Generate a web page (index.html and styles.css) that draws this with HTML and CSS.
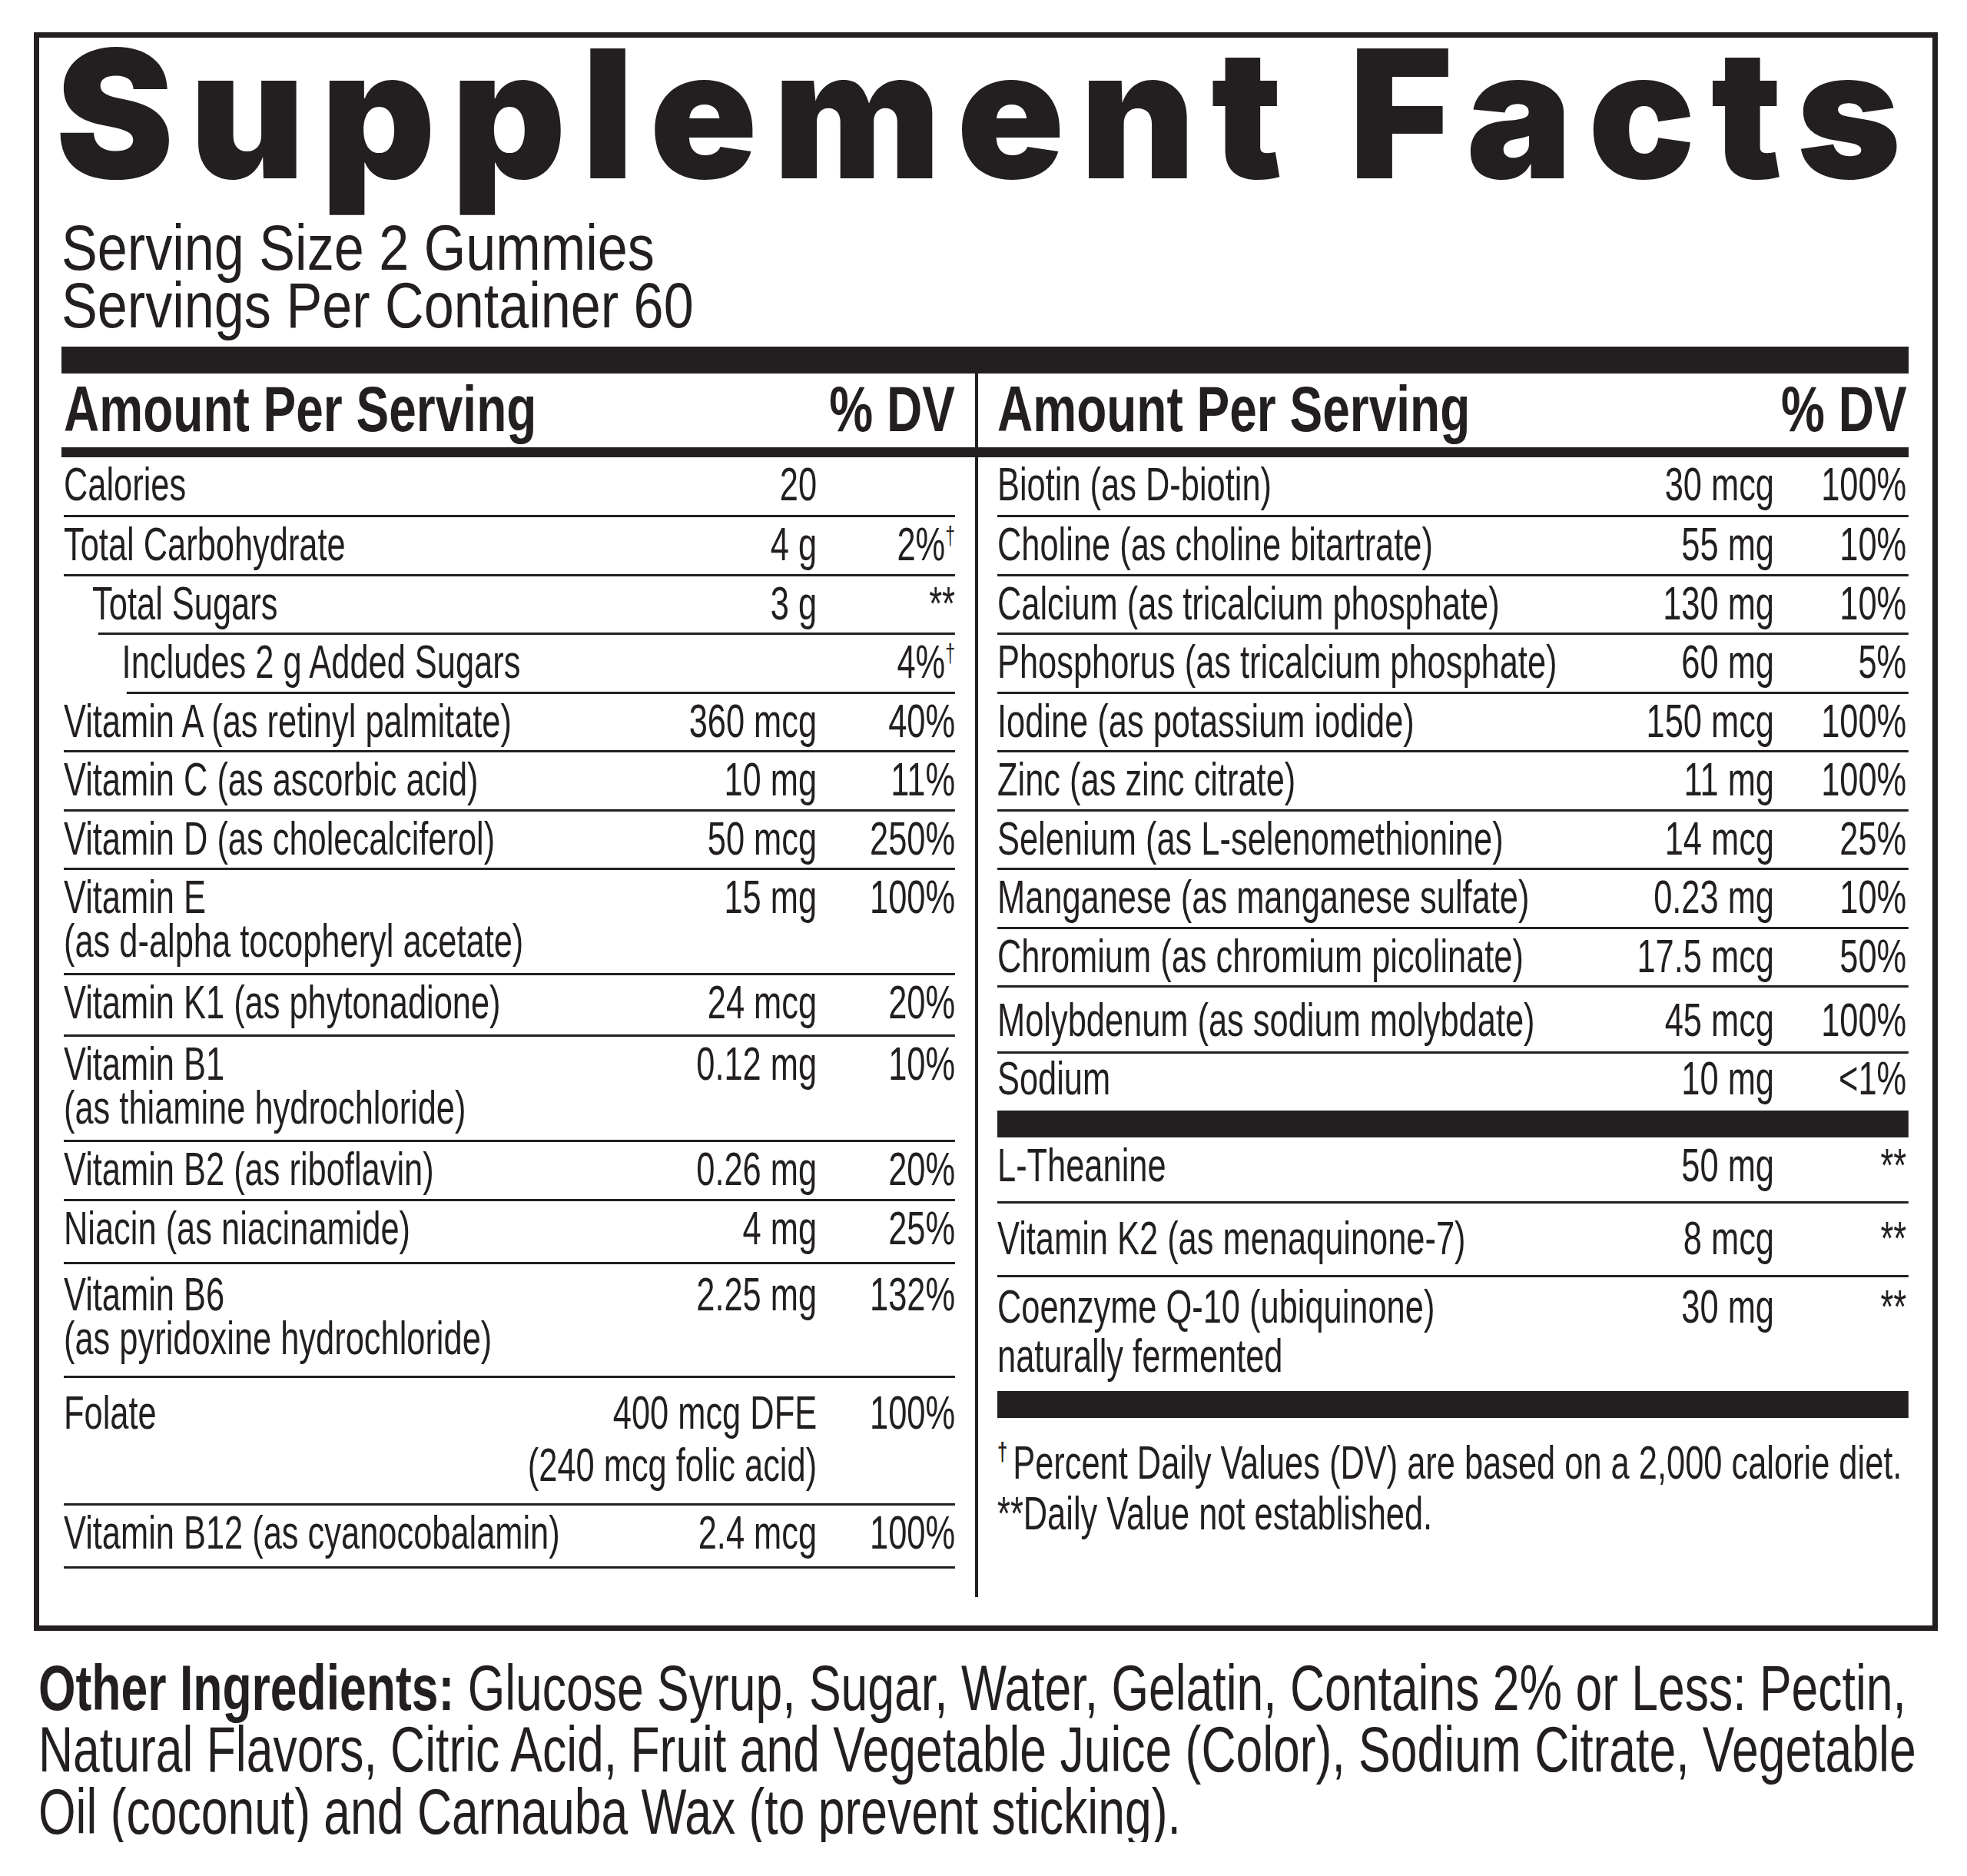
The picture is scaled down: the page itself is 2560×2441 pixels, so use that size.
FILE: index.html
```html
<!DOCTYPE html>
<html lang="en">
<head>
<meta charset="utf-8">
<title>Supplement Facts</title>
<link rel="stylesheet" href="styles.css">
</head>
<body>
<div class="label">
  <h1 class="title">Supplement Facts</h1>
  <div class="serving">Serving Size 2 Gummies<br>Servings Per Container 60</div>
  <div class="bar bar--top"></div>
  <div class="panel">
    <div class="head head--left"><span>Amount Per Serving</span><span>% DV</span></div>
    <div class="divider"></div>
    <div class="head head--right"><span>Amount Per Serving</span><span>% DV</span></div>
    <div class="head-rule"></div>

    <div class="col col--left">
      <div class="squeeze">
        <div class="row row--first"><span class="name">Calories</span><span class="amt">20</span><span class="pct"></span></div>
        <div class="row"><span class="name">Total Carbohydrate</span><span class="amt">4 g</span><span class="pct">2%<sup class="dag">†</sup></span></div>
        <div class="row row--indent1"><span class="name">Total Sugars</span><span class="amt">3 g</span><span class="pct">**</span></div>
        <div class="row row--indent2"><span class="name">Includes 2 g Added Sugars</span><span class="amt"></span><span class="pct">4%<sup class="dag">†</sup></span></div>
        <div class="row"><span class="name">Vitamin A (as retinyl palmitate)</span><span class="amt">360 mcg</span><span class="pct">40%</span></div>
        <div class="row"><span class="name">Vitamin C (as ascorbic acid)</span><span class="amt">10 mg</span><span class="pct">11%</span></div>
        <div class="row"><span class="name">Vitamin D (as cholecalciferol)</span><span class="amt">50 mcg</span><span class="pct">250%</span></div>
        <div class="row row--two"><span class="name">Vitamin E<br>(as d-alpha tocopheryl acetate)</span><span class="amt">15 mg</span><span class="pct">100%</span></div>
        <div class="row row--loose"><span class="name">Vitamin K1 (as phytonadione)</span><span class="amt">24 mcg</span><span class="pct">20%</span></div>
        <div class="row row--two"><span class="name">Vitamin B1<br>(as thiamine hydrochloride)</span><span class="amt">0.12 mg</span><span class="pct">10%</span></div>
        <div class="row"><span class="name">Vitamin B2 (as riboflavin)</span><span class="amt">0.26 mg</span><span class="pct">20%</span></div>
        <div class="row row--looser"><span class="name">Niacin (as niacinamide)</span><span class="amt">4 mg</span><span class="pct">25%</span></div>
        <div class="row row--b6"><span class="name">Vitamin B6<br>(as pyridoxine hydrochloride)</span><span class="amt">2.25 mg</span><span class="pct">132%</span></div>
        <div class="row row--folate"><span class="name">Folate</span><span class="amt">400 mcg DFE<br>(240 mcg folic acid)</span><span class="pct">100%</span></div>
        <div class="row row--looser"><span class="name">Vitamin B12 (as cyanocobalamin)</span><span class="amt">2.4 mcg</span><span class="pct">100%</span></div>
      </div>
    </div>

    <div class="col col--right">
      <div class="squeeze">
        <div class="row row--first"><span class="name">Biotin (as D-biotin)</span><span class="amt">30 mcg</span><span class="pct">100%</span></div>
        <div class="row"><span class="name">Choline (as choline bitartrate)</span><span class="amt">55 mg</span><span class="pct">10%</span></div>
        <div class="row"><span class="name">Calcium (as tricalcium phosphate)</span><span class="amt">130 mg</span><span class="pct">10%</span></div>
        <div class="row"><span class="name">Phosphorus (as tricalcium phosphate)</span><span class="amt">60 mg</span><span class="pct">5%</span></div>
        <div class="row"><span class="name">Iodine (as potassium iodide)</span><span class="amt">150 mcg</span><span class="pct">100%</span></div>
        <div class="row"><span class="name">Zinc (as zinc citrate)</span><span class="amt">11 mg</span><span class="pct">100%</span></div>
        <div class="row"><span class="name">Selenium (as L-selenomethionine)</span><span class="amt">14 mcg</span><span class="pct">25%</span></div>
        <div class="row"><span class="name">Manganese (as manganese sulfate)</span><span class="amt">0.23 mg</span><span class="pct">10%</span></div>
        <div class="row"><span class="name">Chromium (as chromium picolinate)</span><span class="amt">17.5 mcg</span><span class="pct">50%</span></div>
        <div class="row row--moly"><span class="name">Molybdenum (as sodium molybdate)</span><span class="amt">45 mcg</span><span class="pct">100%</span></div>
        <div class="row row--sodium"><span class="name">Sodium</span><span class="amt">10 mg</span><span class="pct">&lt;1%</span></div>
        <div class="bar"></div>
        <div class="row row--theanine"><span class="name">L-Theanine</span><span class="amt">50 mg</span><span class="pct">**</span></div>
        <div class="row row--k2"><span class="name">Vitamin K2 (as menaquinone-7)</span><span class="amt">8 mcg</span><span class="pct">**</span></div>
        <div class="row row--coq"><span class="name">Coenzyme Q-10 (ubiquinone)<br>naturally fermented</span><span class="amt">30 mg</span><span class="pct">**</span></div>
        <div class="bar"></div>
        <div class="notes">
          <p class="note"><sup class="dag dag--note">†</sup>Percent Daily Values (DV) are based on a 2,000 calorie diet.</p>
          <p class="note">**Daily Value not established.</p>
        </div>
      </div>
    </div>
  </div>
</div>
<p class="ingredients"><b>Other Ingredients:</b> Glucose Syrup, Sugar, Water, Gelatin, Contains 2% or Less: Pectin,<br>Natural Flavors, Citric Acid, Fruit and Vegetable Juice (Color), Sodium Citrate, Vegetable<br>Oil (coconut) and Carnauba Wax (to prevent sticking).</p>
</body>
</html>
```

FILE: styles.css
```css
:root {
  --ink: #231f20;
  --squeeze: 0.70;
  --head-squeeze: 0.762;
}

* { box-sizing: border-box; }

body {
  margin: 0;
  background: #fff;
  color: var(--ink);
  font-family: "Liberation Sans", Arial, sans-serif;
}

.label {
  width: 2478px;
  margin: 42px 0 0 44px;
  border: 7px solid var(--ink);
  padding: 0 31px 37px 29px;
}

.title {
  margin: 0 0 0 -8px;
  font-family: Inter, "Liberation Sans", sans-serif;
  font-weight: 900;
  font-size: 232px;
  line-height: 198px;
  letter-spacing: 20px;
  white-space: nowrap;
}

.serving {
  margin-top: 38px;
  font-size: 84px;
  line-height: 75px;
  white-space: nowrap;
  transform: scaleX(0.835);
  transform-origin: 0 0;
}

.bar {
  height: 35px;
  background: var(--ink);
}

.bar--top { margin-top: 16px; }

.panel {
  display: grid;
  grid-template-columns: 1163px 55px 1186px;
  grid-template-rows: 96px 13px auto 37px;
}

.head {
  grid-row: 1;
  display: flex;
  justify-content: space-between;
  font-weight: 700;
  font-size: 84px;
  line-height: 92px;
  padding-bottom: 4px;
  white-space: nowrap;
  transform: scaleX(var(--head-squeeze));
  transform-origin: 0 0;
}

.head--left { grid-column: 1; width: calc(1163px / var(--head-squeeze)); padding-left: 4px; }
.head--right { grid-column: 3; width: calc(1186px / var(--head-squeeze)); padding-right: 3px; }

.head-rule {
  grid-row: 2;
  grid-column: 1 / -1;
  background: var(--ink);
}

.divider {
  grid-column: 2;
  grid-row: 1 / -1;
  width: 4px;
  justify-self: center;
  background: var(--ink);
}

.col { grid-row: 3; min-width: 0; }
.col--left { grid-column: 1; padding-left: 3px; }
.col--right { grid-column: 3; }

.squeeze {
  width: calc(100% / var(--squeeze));
  transform: scaleX(var(--squeeze));
  transform-origin: 0 0;
  font-size: 62px;
  line-height: 57px;
}

.row {
  display: grid;
  grid-template-columns: 1fr auto 257px;
  padding: 6px 0 10.5px;
  border-bottom: 3px solid var(--ink);
  white-space: nowrap;
}

.col--right .row { grid-template-columns: 1fr auto 250px; }
.col--right .pct { padding-right: 4px; }

.amt, .pct { text-align: right; }

.row--first { padding-bottom: 12px; }
.row--loose { padding-bottom: 14px; }
.row--looser { padding-bottom: 16px; }
.row--two { padding-bottom: 14px; }
.row--b6 { padding: 10px 0 21px; }
.row--folate { padding: 11px 0 16px; line-height: 68px; }

.row--indent1 { margin-left: 64px; }
.row--indent1 .name { margin-left: -11px; }
.row--indent2 { margin-left: 117px; }
.row--indent2 .name { margin-left: -9px; }

.row--moly { padding: 13px 0 12.5px; }
.row--sodium { padding: 3px 0 14.5px; border-bottom: 0; }
.row--theanine { padding: 7px 0 19px; }
.row--k2 { padding: 16px 0 20px; }
.row--coq { padding: 5.5px 0 14.5px; line-height: 64px; border-bottom: 0; }

.dag {
  font-size: 33px;
  line-height: 0;
  vertical-align: 21px;
}

.dag--note {
  font-size: 34px;
  font-weight: 700;
  vertical-align: 24px;
  margin-right: 10px;
}

.notes { padding-top: 25px; }

.note {
  margin: 0;
  line-height: 66px;
  white-space: nowrap;
}

.ingredients {
  margin: 34px 0 0 50px;
  font-size: 82.5px;
  line-height: 80.5px;
  white-space: nowrap;
  transform: scaleX(0.757);
  transform-origin: 0 0;
}

.ingredients b { font-weight: 700; }
```
